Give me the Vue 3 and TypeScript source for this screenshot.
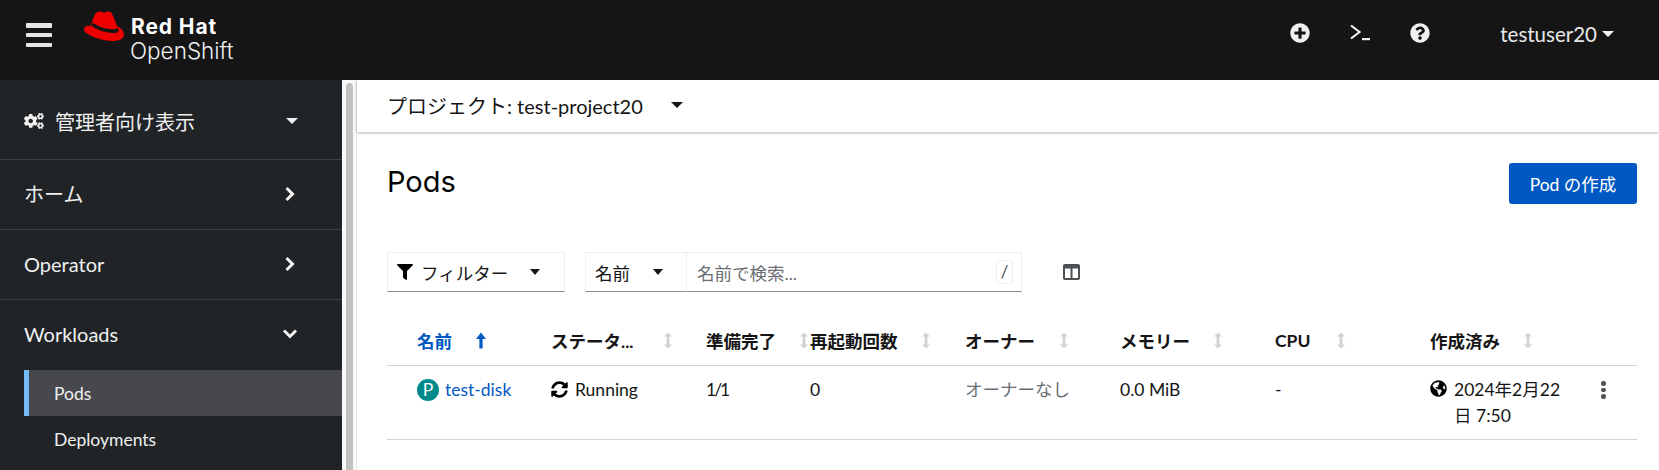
<template>
  <div class="page">
    <header class="masthead">
      <button class="burger" aria-label="menu"><span></span><span></span><span></span></button>
      <svg class="hat" viewBox="0 0 40 30">
        <path fill="#ee0000" d="M12.5 1.5C14.5-.3 18 1 20 1.8C22 1 25-.3 27 1.5C29 3.5 31 10 33 15C37 17 40 20 40 23.5C40 28 35 30 28 30C19 30 8 26 3 22.5C1 21 0 19.5 0 18C0 15.5 3 14 7 15C8 11 10 4 12.5 1.5Z" />
        <path fill="#151515" d="M8.7 11.4C14 15.5 23 18.5 31 18.2C32.5 18.1 33.3 17.3 33 15.5L34.4 19C35 20.8 33 22 30.5 22C22 22.2 13 18.8 7.5 15Z" />
      </svg>
      <div class="brand">
        <div class="brand-top">Red Hat</div>
        <div class="brand-bottom">OpenShift</div>
      </div>
      <div class="mast-tools">
        <svg class="mast-icon" viewBox="0 0 512 512"><path :d="icons.plus" /></svg>
        <svg class="mast-icon" viewBox="0 0 20 20"><path d="M1 2.5 9.5 9 1 15.5" fill="none" stroke="currentColor" stroke-width="2.2" /><rect x="12" y="15" width="8" height="2.2" /></svg>
        <svg class="mast-icon" viewBox="0 0 512 512"><path :d="icons.help" /></svg>
      </div>
      <div class="user">testuser20<span class="caret caret-user"></span></div>
    </header>

    <div class="body">
      <nav class="sidebar">
        <div class="nav-section perspective">
          <svg class="cogs" viewBox="0 0 640 512"><path :d="icons.cogs" /></svg>
          <span class="nav-label">管理者向け表示</span>
          <span class="caret caret-nav"></span>
        </div>
        <div class="nav-section" v-for="item in navItems" :key="item">
          <span class="nav-label">{{ item }}</span>
          <svg class="chev" viewBox="0 0 12 16"><path d="M2.5 2 8.5 8 2.5 14" /></svg>
        </div>
        <div class="nav-section nav-open">
          <span class="nav-label">Workloads</span>
          <svg class="chev" viewBox="0 0 16 12"><path d="M2 2.5 8 8.5 14 2.5" /></svg>
        </div>
        <div class="nav-sub active">Pods</div>
        <div class="nav-sub">Deployments</div>
      </nav>

      <div class="gutter"><div class="thumb"></div></div>

      <main class="main">
        <div class="project-bar">
          <span>プロジェクト: test-project20</span>
          <span class="caret caret-project"></span>
        </div>

        <section class="content">
          <div class="title-row">
            <h1>Pods</h1>
            <button class="create">Pod の作成</button>
          </div>

          <div class="toolbar">
            <div class="select filter-select">
              <svg class="filter-icon" viewBox="0 0 512 512"><path :d="icons.filter" /></svg>
              <span>フィルター</span>
              <span class="caret caret-filter"></span>
            </div>
            <div class="search-group">
              <div class="select name-select">
                <span>名前</span>
                <span class="caret caret-name"></span>
              </div>
              <div class="search">
                <span class="placeholder">名前で検索...</span>
                <span class="key">/</span>
              </div>
            </div>
            <svg class="columns-icon" viewBox="0 0 17 16">
              <path fill-rule="evenodd" d="M2 0h13a2 2 0 0 1 2 2v12a2 2 0 0 1-2 2H2a2 2 0 0 1-2-2V2a2 2 0 0 1 2-2zM2 4.5V14h5.5V4.5zM9.5 4.5V14H15V4.5z" />
            </svg>
          </div>

          <div class="table">
            <div class="row head">
              <div v-for="col in columns" :key="col.label" class="th" :class="{ sorted: col.sorted }">
                <span class="th-label" :style="{ width: col.labelWidth + 'px' }">{{ col.label }}</span>
                <svg v-if="col.sorted" class="sort sort-on" viewBox="0 0 10 16"><path d="M5 0 10 6.5H6.6V16H3.4V6.5H0Z" /></svg>
                <svg v-else class="sort" viewBox="0 0 8 16"><path d="M4 0 8 4H5.4V12H8L4 16 0 12H2.6V4H0Z" /></svg>
              </div>
              <div></div>
            </div>
            <div class="row data">
              <div class="td name-cell">
                <span class="pod-badge">P</span><a class="link">test-disk</a>
              </div>
              <div class="td">
                <svg class="cell-icon" viewBox="0 0 512 512"><path :d="icons.sync" /></svg>Running
              </div>
              <div class="td ready">1/1</div>
              <div class="td">0</div>
              <div class="td muted">オーナーなし</div>
              <div class="td">0.0 MiB</div>
              <div class="td">-</div>
              <div class="td created">
                <svg class="cell-icon globe" viewBox="0 0 496 512"><path :d="icons.globe" /></svg>
                <span>2024年2月22<br />日 7:50</span>
              </div>
              <div class="td kebab"><i></i><i></i><i></i></div>
            </div>
          </div>
        </section>
      </main>
    </div>
  </div>
</template>

<script setup lang="ts">
const navItems = ['ホーム', 'Operator']

const columns = [
  { label: '名前', labelWidth: 59, sorted: true },
  { label: 'ステータ...', labelWidth: 113 },
  { label: '準備完了', labelWidth: 94 },
  { label: '再起動回数', labelWidth: 112 },
  { label: 'オーナー', labelWidth: 95 },
  { label: 'メモリー', labelWidth: 94 },
  { label: 'CPU', labelWidth: 62 },
  { label: '作成済み', labelWidth: 94 }
]

const icons = {
  plus: 'M256 8C119 8 8 119 8 256s111 248 248 248 248-111 248-248S393 8 256 8zm144 276c0 6.6-5.4 12-12 12h-92v92c0 6.6-5.4 12-12 12h-56c-6.6 0-12-5.4-12-12v-92h-92c-6.6 0-12-5.4-12-12v-56c0-6.6 5.4-12 12-12h92v-92c0-6.6 5.4-12 12-12h56c6.6 0 12 5.4 12 12v92h92c6.6 0 12 5.4 12 12v56z',
  help: 'M504 256c0 136.997-111.043 248-248 248S8 392.997 8 256C8 119.083 119.043 8 256 8s248 111.083 248 248zM262.655 90c-54.497 0-89.255 22.957-116.549 63.758-3.536 5.286-2.353 12.415 2.715 16.258l34.699 26.31c5.205 3.947 12.621 3.008 16.665-2.122 17.864-22.658 30.113-35.797 57.303-35.797 20.429 0 45.698 13.148 45.698 32.958 0 14.976-12.363 22.667-32.534 33.976C247.128 238.528 216 254.941 216 296v4c0 6.627 5.373 12 12 12h56c6.627 0 12-5.373 12-12v-1.333c0-28.462 83.186-29.647 83.186-106.667 0-58.002-60.165-102-116.531-102zM256 338c-25.365 0-46 20.635-46 46 0 25.364 20.635 46 46 46s46-20.636 46-46c0-25.365-20.635-46-46-46z',
  sync: 'M370.72 133.28C339.458 104.008 298.888 87.962 255.848 88c-77.458.068-144.328 53.178-162.791 126.85-1.344 5.363-6.122 9.15-11.651 9.15H24.103c-7.498 0-13.194-6.807-11.807-14.176C33.933 94.924 134.813 8 256 8c66.448 0 126.791 26.136 171.315 68.685L463.03 40.97C478.149 25.851 504 36.559 504 57.941V192c0 13.255-10.745 24-24 24H345.941c-21.382 0-32.09-25.851-16.971-40.971l41.75-41.749zM32 296h134.059c21.382 0 32.09 25.851 16.971 40.971l-41.75 41.75c31.262 29.273 71.835 45.319 114.876 45.28 77.418-.07 144.315-53.144 162.787-126.849 1.344-5.363 6.122-9.15 11.651-9.15h57.304c7.498 0 13.194 6.807 11.807 14.176C478.067 417.076 377.187 504 256 504c-66.448 0-126.791-26.136-171.315-68.685L48.97 471.03C33.851 486.149 8 475.441 8 454.059V320c0-13.255 10.745-24 24-24z',
  filter: 'M487.976 0H24.028C2.71 0-8.047 25.866 7.058 40.971L192 225.941V432c0 7.831 3.821 15.17 10.237 19.662l80 55.98C298.02 518.69 320 507.493 320 487.98V225.941l184.947-184.97C520.021 25.896 509.338 0 487.976 0z',
  globe: 'M248 8C111.03 8 0 119.03 0 256s111.03 248 248 248 248-111.03 248-248S384.97 8 248 8zm82.29 357.6c-3.9 3.88-7.99 7.95-11.31 11.28-2.99 3-5.1 6.7-6.17 10.71-1.51 5.66-2.73 11.38-4.77 16.87l-17.39 46.85c-13.76 3-28 4.69-42.65 4.69v-27.38c1.69-12.62-7.64-36.26-22.63-51.25-6-6-9.37-14.14-9.37-22.63v-32.01c0-11.64-6.27-22.34-16.46-27.97-14.37-7.95-34.81-19.06-48.81-26.11-11.48-5.78-22.1-13.14-31.65-21.75l-.8-.72a114.792 114.792 0 0 1-18.06-20.74c-9.38-13.77-24.66-36.42-34.59-51.14 20.47-45.5 57.36-82.04 103.2-101.89l24.01 12.01C203.48 89.74 216 82.01 216 70.11v-11.3c7.99-1.29 16.12-2.11 24.39-2.42l28.3 28.3c6.25 6.25 6.25 16.38 0 22.63L264 112l-10.34 10.34c-3.12 3.12-3.12 8.19 0 11.31l4.69 4.69c3.12 3.12 3.12 8.19 0 11.31l-8 8a8.008 8.008 0 0 1-5.66 2.34h-8.99c-2.08 0-4.08.81-5.58 2.27l-9.92 9.65a8.008 8.008 0 0 0-1.58 9.31l15.59 31.19c2.66 5.32-1.21 11.58-7.15 11.58h-5.64c-1.93 0-3.79-.7-5.24-1.96l-9.28-8.06a16.017 16.017 0 0 0-15.55-3.1l-31.17 10.39a11.95 11.95 0 0 0-8.17 11.34c0 4.53 2.56 8.66 6.61 10.69l11.08 5.54c9.41 4.71 19.79 7.16 30.31 7.16s22.59 27.29 32 32h66.75c8.49 0 16.62 3.37 22.63 9.37l13.69 13.69a30.503 30.503 0 0 1 8.93 21.57 46.536 46.536 0 0 1-13.72 32.98zM417 274.25c-5.79-1.45-10.84-5-14.15-9.97l-17.98-26.97a23.97 23.97 0 0 1 0-26.62l19.59-29.38c2.32-3.47 5.5-6.29 9.24-8.15l12.98-6.49C440.2 193.59 448 223.87 448 256c0 8.67-.74 17.16-1.82 25.54L417 274.25z',
  cogs: 'M512.1 191l-8.2 14.3c-3 5.3-9.4 7.5-15.1 5.4-11.8-4.4-22.6-10.7-32.1-18.6-4.6-3.8-5.8-10.5-2.8-15.7l8.2-14.3c-6.9-8-12.3-17.3-15.9-27.4h-16.5c-6 0-11.2-4.3-12.2-10.3-2-12-2.1-24.6 0-37.1 1-6 6.2-10.4 12.2-10.4h16.5c3.6-10.1 9-19.4 15.9-27.4l-8.2-14.3c-3-5.2-1.9-11.9 2.8-15.7 9.5-7.9 20.4-14.2 32.1-18.6 5.7-2.1 12.1.1 15.1 5.4l8.2 14.3c10.5-1.9 21.2-1.9 31.7 0L552 6.3c3-5.3 9.4-7.5 15.1-5.4 11.8 4.4 22.6 10.7 32.1 18.6 4.6 3.8 5.8 10.5 2.8 15.7l-8.2 14.3c6.9 8 12.3 17.3 15.9 27.4h16.5c6 0 11.2 4.3 12.2 10.3 2 12 2.1 24.6 0 37.1-1 6-6.2 10.4-12.2 10.4h-16.5c-3.6 10.1-9 19.4-15.9 27.4l8.2 14.3c3 5.2 1.9 11.9-2.8 15.7-9.5 7.9-20.4 14.2-32.1 18.6-5.7 2.1-12.1-.1-15.1-5.4l-8.2-14.3c-10.4 1.9-21.2 1.9-31.7 0zm-10.5-58.8c38.5 29.6 82.4-14.3 52.8-52.8-38.5-29.7-82.4 14.3-52.8 52.8zM386.3 286.1l33.7 16.8c10.1 5.8 14.5 18.1 10.5 29.1-8.9 24.2-26.4 46.4-42.6 65.8-7.4 8.9-20.2 11.1-30.3 5.3l-29.1-16.8c-16 13.7-34.6 24.6-54.9 31.7v33.6c0 11.6-8.3 21.6-19.7 23.6-24.6 4.2-50.4 4.4-75.9 0-11.5-2-20-11.9-20-23.6V418c-20.3-7.2-38.9-18-54.9-31.7L74 403c-10 5.8-22.9 3.6-30.3-5.3-16.2-19.4-33.3-41.6-42.2-65.7-4-10.9.4-23.2 10.5-29.1l33.3-16.8c-3.9-20.9-3.9-42.4 0-63.4L12 205.8c-10.1-5.8-14.6-18.1-10.5-29 8.9-24.2 26-46.4 42.2-65.8 7.4-8.9 20.2-11.1 30.3-5.3l29.1 16.8c16-13.7 34.6-24.6 54.9-31.7V57.1c0-11.5 8.2-21.5 19.6-23.5 24.6-4.2 50.5-4.4 76-.1 11.5 2 20 11.9 20 23.6v33.6c20.3 7.2 38.9 18 54.9 31.7l29.1-16.8c10-5.8 22.9-3.6 30.3 5.3 16.2 19.4 33.2 41.6 42.1 65.8 4 10.9.1 23.2-10 29.1l-33.7 16.8c3.9 21 3.9 42.5 0 63.5zm-117.6 21.1c59.2-77-28.7-164.9-105.7-105.7-59.2 77 28.7 164.9 105.7 105.7zm243.4 182.7l-8.2 14.3c-3 5.3-9.4 7.5-15.1 5.4-11.8-4.4-22.6-10.7-32.1-18.6-4.6-3.8-5.8-10.5-2.8-15.7l8.2-14.3c-6.9-8-12.3-17.3-15.9-27.4h-16.5c-6 0-11.2-4.3-12.2-10.3-2-12-2.1-24.6 0-37.1 1-6 6.2-10.4 12.2-10.4h16.5c3.6-10.1 9-19.4 15.9-27.4l-8.2-14.3c-3-5.2-1.9-11.9 2.8-15.7 9.5-7.9 20.4-14.2 32.1-18.6 5.7-2.1 12.1.1 15.1 5.4l8.2 14.3c10.5-1.9 21.2-1.9 31.7 0l8.2-14.3c3-5.3 9.4-7.5 15.1-5.4 11.8 4.4 22.6 10.7 32.1 18.6 4.6 3.8 5.8 10.5 2.8 15.7l-8.2 14.3c6.9 8 12.3 17.3 15.9 27.4h16.5c6 0 11.2 4.3 12.2 10.3 2 12 2.1 24.6 0 37.1-1 6-6.2 10.4-12.2 10.4h-16.5c-3.6 10.1-9 19.4-15.9 27.4l8.2 14.3c3 5.2 1.9 11.9-2.8 15.7-9.5 7.9-20.4 14.2-32.1 18.6-5.7 2.1-12.1-.1-15.1-5.4l-8.2-14.3c-10.4 1.9-21.2 1.9-31.7 0zM501.6 431c38.5 29.6 82.4-14.3 52.8-52.8-38.5-29.6-82.4 14.3-52.8 52.8z'
}
</script>

<style>
html,
body {
  margin: 0;
  overflow: hidden;
}
</style>

<style scoped>
.page {
  height: 470px;
  display: flex;
  flex-direction: column;
  overflow: hidden;
  font-family: Lato, "Noto Sans CJK JP", sans-serif;
  font-size: 17.5px;
  color: #151515;
  background: #fff;
}

.masthead {
  height: 80px;
  flex: none;
  display: flex;
  align-items: center;
  background: #151515;
  color: #f0f0f0;
}

.burger {
  margin-left: 26px;
  width: 26px;
  height: 24px;
  padding: 0;
  border: none;
  background: none;
  display: flex;
  flex-direction: column;
  justify-content: space-between;
  margin-top: -10px;
}

.burger span {
  height: 4.5px;
  border-radius: 1px;
  background: #e6e6e6;
}

.hat {
  width: 40px;
  height: 30px;
  margin-left: 32px;
  margin-top: -28px;
}

.brand {
  margin-left: 6px;
  margin-top: -3px;
}

.brand-top {
  font-family: Inter, sans-serif;
  font-size: 21px;
  font-weight: 700;
  line-height: 24px;
  letter-spacing: 0.9px;
  color: #fff;
  padding-left: 1px;
}

.brand-bottom {
  font-family: Inter, sans-serif;
  font-size: 22.5px;
  font-weight: 300;
  line-height: 24px;
  color: #f0f0f0;
}

.mast-tools {
  margin-left: auto;
  display: flex;
  gap: 40px;
  margin-top: -14px;
}

.mast-icon {
  width: 20px;
  height: 20px;
  fill: currentColor;
}

.user {
  margin-left: 70px;
  margin-right: 45px;
  margin-top: -12px;
  display: flex;
  align-items: center;
  font-size: 20.5px;
  color: #e8e8e8;
}

.caret {
  display: inline-block;
  width: 0;
  height: 0;
  border-left: 6px solid transparent;
  border-right: 6px solid transparent;
  border-top: 6px solid #151515;
}

.caret-user {
  border-top-color: #f0f0f0;
  margin-left: 5px;
}

.body {
  flex: 1;
  display: flex;
  min-height: 0;
}

.sidebar {
  width: 342px;
  flex: none;
  background: #212427;
  color: #f0f0f0;
  overflow: hidden;
}

.nav-section {
  height: 70px;
  box-sizing: border-box;
  padding: 0 43px 0 24px;
  display: flex;
  align-items: center;
  border-bottom: 1px solid #3c3f42;
  font-size: 20px;
}

.nav-section .nav-label {
  margin-top: -2px;
}

.perspective {
  height: 80px;
  padding-top: 3px;
  padding-right: 42px;
}

.perspective .nav-label {
  margin-top: 1px;
}

.nav-open {
  border-bottom: none;
}

.nav-label {
  flex: 1;
}

.cogs {
  width: 20px;
  height: 16px;
  margin-right: 11px;
  fill: #f0f0f0;
}

.caret-nav {
  border-top-color: #f0f0f0;
  margin-right: 2px;
}

.chev {
  width: 12px;
  height: 16px;
  margin-right: 3px;
  margin-top: -2px;
  fill: none;
  stroke: #f5f5f5;
  stroke-width: 3;
}

.nav-open .chev {
  width: 16px;
  height: 12px;
  margin-right: 1px;
}

.nav-sub {
  margin-left: 24px;
  height: 46px;
  box-sizing: border-box;
  padding-left: 30px;
  display: flex;
  align-items: center;
  font-size: 17.5px;
}

.nav-sub.active {
  padding-left: 25px;
  border-left: 5px solid #73bcf7;
  background: #47484c;
}

.gutter {
  width: 15px;
  flex: none;
  background: #fafafa;
  border-right: 1px solid #e8e8e8;
  box-sizing: border-box;
  padding: 3px 3px 0 4px;
}

.thumb {
  height: 100%;
  border-radius: 4px 4px 0 0;
  background: #c1c1c1;
}

.main {
  flex: 1;
  min-width: 0;
}

.project-bar {
  height: 52px;
  box-sizing: border-box;
  padding: 0 0 2px 30px;
  display: flex;
  align-items: center;
  font-size: 20px;
  box-shadow: 0 1px 3px rgba(3, 3, 3, 0.3);
  position: relative;
}

.caret-project {
  margin-left: 28px;
}

.content {
  padding: 31px 22px 0 30px;
}

.title-row {
  display: flex;
  align-items: center;
  justify-content: space-between;
  height: 41px;
}

h1 {
  margin: 0 0 3px;
  font-family: Inter, sans-serif;
  font-size: 29px;
  font-weight: 400;
  line-height: 38px;
  color: #030303;
}

.create {
  width: 128px;
  height: 41px;
  border: none;
  border-radius: 3px;
  background: #0058c2;
  color: #fff;
  font: inherit;
}

.toolbar {
  margin-top: 48px;
  display: flex;
  align-items: center;
  height: 40px;
}

.select {
  height: 40px;
  box-sizing: border-box;
  display: flex;
  align-items: center;
  border: 1px solid #f0f0f0;
  border-bottom: 1px solid #8a8d90;
}

.filter-select {
  width: 178px;
  padding-left: 9px;
}

.filter-icon {
  width: 16px;
  height: 16px;
  margin-right: 8px;
}

.caret-filter {
  margin-left: 22px;
  border-left-width: 5.5px;
  border-right-width: 5.5px;
}

.search-group {
  margin-left: 20px;
  display: flex;
}

.name-select {
  width: 102px;
  padding-left: 9px;
}

.caret-name {
  margin-left: 23px;
  border-left-width: 5.5px;
  border-right-width: 5.5px;
}

.search {
  width: 335px;
  height: 40px;
  box-sizing: border-box;
  display: flex;
  align-items: center;
  justify-content: space-between;
  padding: 0 8px 0 10px;
  border-top: 1px solid #f0f0f0;
  border-right: 1px solid #f0f0f0;
  border-bottom: 1px solid #8a8d90;
}

.placeholder {
  color: #6a6e73;
}

.key {
  width: 17px;
  height: 24px;
  box-sizing: border-box;
  border: 1px solid #f0f0f0;
  border-radius: 3px;
  text-align: center;
  font-size: 17.5px;
  line-height: 22px;
  color: #4f5255;
}

.columns-icon {
  width: 17px;
  height: 16px;
  margin-left: 41px;
  fill: #4f5255;
}

.table {
  margin-top: 23px;
}

.row {
  display: grid;
  grid-template-columns: 134px 155px 104px 155px 155px 155px 155px 174px 1fr;
  padding-left: 30px;
}

.head {
  height: 50px;
  align-items: center;
  border-bottom: 1px solid #d2d2d2;
  font-weight: 700;
}

.th {
  display: flex;
  align-items: center;
  white-space: nowrap;
}

.th-label {
  display: inline-block;
  flex: none;
}

.th.sorted {
  color: #0058c2;
}

.sort {
  width: 8px;
  height: 17px;
  fill: #d2d2d2;
  flex: none;
}

.sort-on {
  width: 10px;
  fill: #0058c2;
}

.data {
  height: 74px;
  box-sizing: border-box;
  padding-top: 11px;
  border-bottom: 1px solid #d2d2d2;
  line-height: 26px;
}

.td {
  display: flex;
  align-items: flex-start;
  white-space: nowrap;
}

.ready {
  letter-spacing: -2px;
}

.muted {
  color: #6a6e73;
}

.name-cell {
  gap: 6px;
}

.pod-badge {
  width: 22px;
  height: 22px;
  margin-top: 2px;
  border-radius: 50%;
  background: #008a8b;
  color: #fff;
  font-size: 17.5px;
  line-height: 22px;
  text-align: center;
  flex: none;
}

.link {
  color: #0058c2;
}

.cell-icon {
  width: 17px;
  height: 17px;
  margin: 4px 7px 0 0;
  flex: none;
}

.globe {
  margin-top: 3px;
  margin-right: 7px;
}

.kebab {
  flex-direction: column;
  align-items: center;
  gap: 2px;
  width: 5px;
  margin-top: 4px;
  margin-left: -3px;
}

.kebab i {
  width: 4.5px;
  height: 4.5px;
  border-radius: 50%;
  background: #4f5255;
}
</style>
